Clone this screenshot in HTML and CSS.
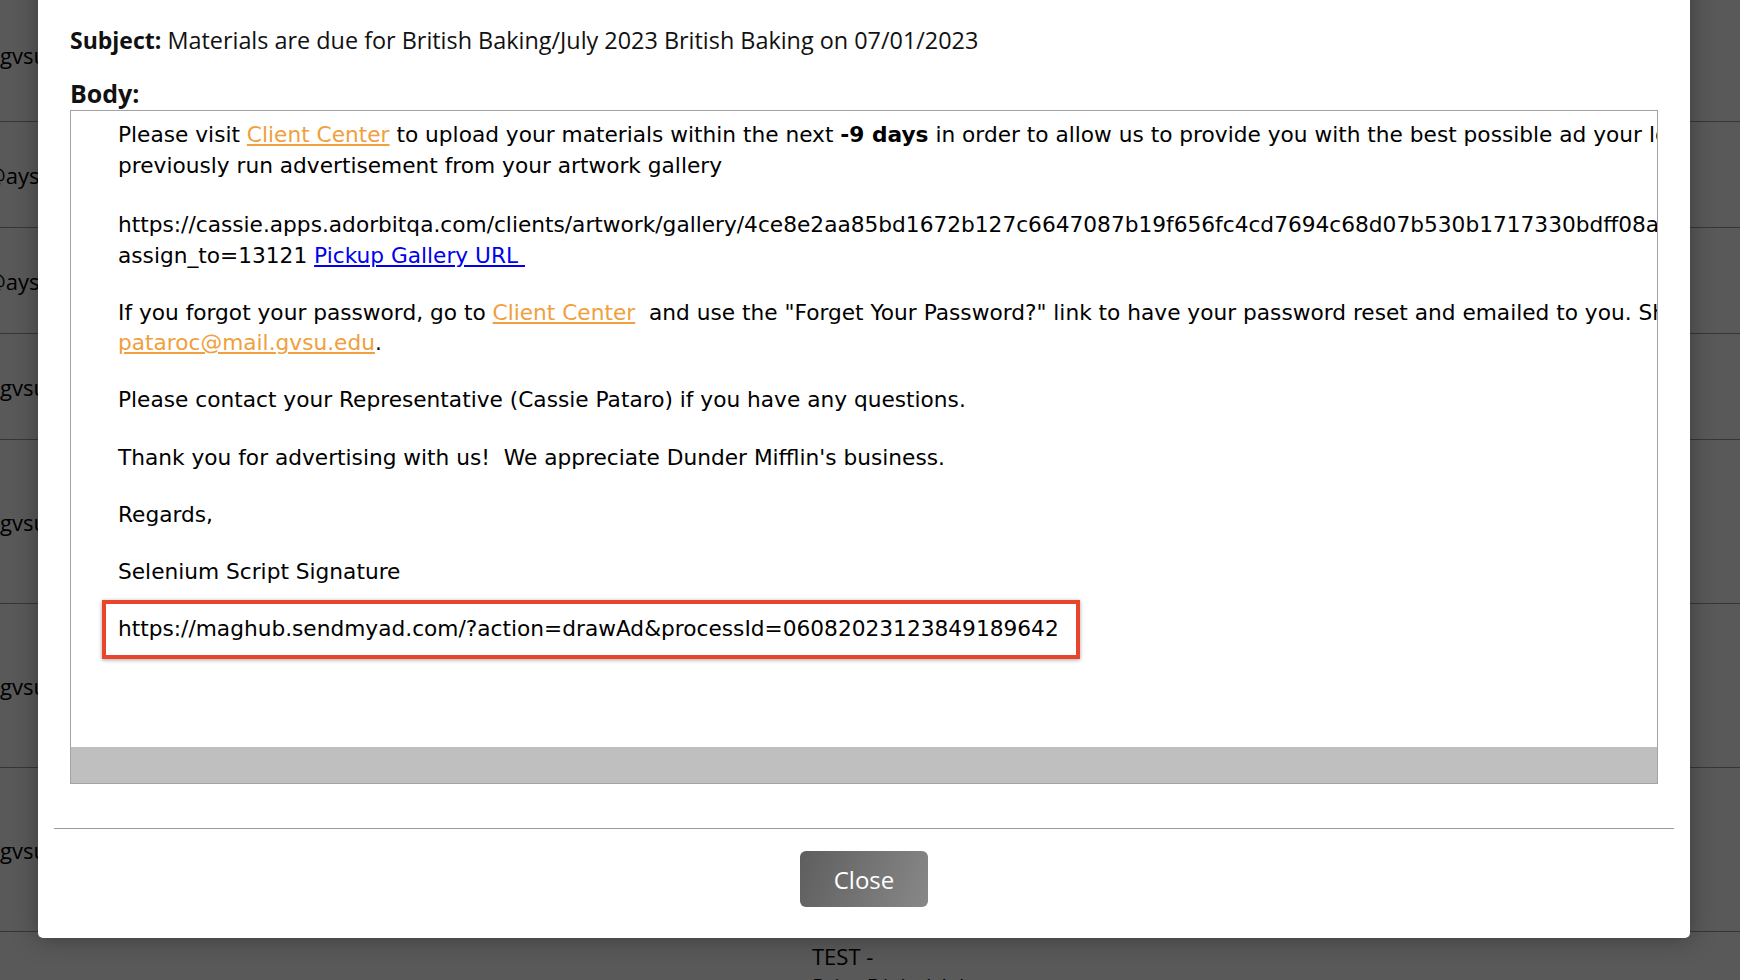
FILE: index.html
```html
<!DOCTYPE html>
<html>
<head>
<meta charset="utf-8">
<title>Email Preview</title>
<link rel="stylesheet" href="styles.css">
</head>
<body>
<table class="bgtable">
  <tr class="row-first"><td class="col-a">gvsu.edu</td><td class="col-b"></td></tr>
  <tr class="row-short"><td class="col-a shift">@ays.com</td><td class="col-b"></td></tr>
  <tr class="row-short"><td class="col-a shift">@ays.com</td><td class="col-b"></td></tr>
  <tr class="row-short"><td class="col-a">gvsu.edu</td><td class="col-b"></td></tr>
  <tr class="row-tall"><td class="col-a">gvsu.edu</td><td class="col-b"></td></tr>
  <tr class="row-tall"><td class="col-a">gvsu.edu</td><td class="col-b"></td></tr>
  <tr class="row-tall"><td class="col-a">gvsu.edu</td><td class="col-b"></td></tr>
  <tr class="row-last"><td class="col-a"></td><td class="col-b top">TEST -<br>Print Digital Ad</td></tr>
</table>

<div class="modal">
  <div class="modal-body">
    <div class="subject"><b>Subject:</b> Materials are due for British Baking/July 2023 British Baking on 07/01/2023</div>
    <div class="body-label">Body:</div>
    <div class="mailbox">
      <div class="mail">
        <p class="first">Please visit <a class="orange" href="#">Client Center</a> to upload your materials within the next <b>-9 days</b> in order to allow us to provide you with the best possible ad your logo, or choose a<br>previously run advertisement from your artwork gallery</p>
        <p>https://cassie.apps.adorbitqa.com/clients/artwork/gallery/4ce8e2aa85bd1672b127c6647087b19f656fc4cd7694c68d07b530b1717330bdff08a61c2e?pickup=1&amp;<br>assign_to=13121 <a class="blue" href="#">Pickup Gallery URL&nbsp;</a></p>
        <p>If you forgot your password, go to <a class="orange" href="#">Client Center</a>&nbsp; and use the "Forget Your Password?" link to have your password reset and emailed to you. Should you need help, contact<br><a class="orange" href="#">pataroc@mail.gvsu.edu</a>.</p>
        <p>Please contact your Representative (Cassie Pataro) if you have any questions.</p>
        <p>Thank you for advertising with us!&nbsp; We appreciate Dunder Mifflin's business.</p>
        <p>Regards,</p>
        <p>Selenium Script Signature</p>
        <p><span class="marked">https://maghub.sendmyad.com/?action=drawAd&amp;processId=06082023123849189642</span></p>
      </div>
      <div class="hscroll"></div>
    </div>
  </div>
  <div class="modal-footer">
    <button class="closebtn">Close</button>
  </div>
</div>
</body>
</html>
```

FILE: styles.css
```css
body {
  margin: 0;
  background: #595959;
  font-family: "Open Sans", "Liberation Sans", sans-serif;
  color: #000;
  overflow: hidden;
}

/* page behind the overlay */
.bgtable {
  width: 100%;
  border-collapse: collapse;
  margin-top: -12px;
  font-size: 22px;
}
.bgtable td {
  border-bottom: 1px solid #363636;
  padding: 0;
  vertical-align: middle;
  white-space: nowrap;
}
.row-first td { height: 133px; }
.row-short td { height: 105px; }
.row-tall td { height: 163px; }
.row-last td { height: 80px; }
.col-a { width: 812px; }
.shift { position: relative; left: -14px; }
.top {
  vertical-align: top !important;
  padding-top: 9px !important;
  line-height: 30px;
}

/* modal */
.modal {
  position: absolute;
  left: 38px;
  top: -20px;
  width: 1652px;
  box-sizing: border-box;
  background: #fff;
  border-radius: 5px;
  box-shadow: 0 0 24px rgba(0, 0, 0, 0.35);
}
.modal-body {
  padding: 44px 32px 44px;
}
.subject {
  font-size: 23.4px;
  line-height: 32px;
  color: #111;
}
.subject b {
  font-size: 23px;
}
.body-label {
  font-size: 25px;
  font-weight: bold;
  line-height: 32px;
  margin-top: 21px;
  margin-bottom: 1px;
  color: #111;
}
.mailbox {
  border: 1px solid #a3a3a3;
}
.mail {
  height: 636px;
  box-sizing: border-box;
  padding: 9px 0 0 47px;
  overflow: hidden;
  white-space: nowrap;
  font-family: "DejaVu Sans", Verdana, sans-serif;
  font-size: 21.7px;
  line-height: 30.5px;
  color: #000;
}
.mail p {
  margin: 0 0 26.6px;
}
.mail p.first {
  margin-bottom: 29.3px;
}
.orange { color: #f0a03c; }
.blue { color: #0000ee; }
.marked {
  display: inline-block;
  vertical-align: top;
  position: relative;
}
.marked::after {
  content: "";
  position: absolute;
  top: -14px;
  bottom: -15px;
  left: -16px;
  right: -21px;
  border: 4px solid #e8452c;
  box-shadow: 0 1px 4px rgba(0, 0, 0, 0.35);
}
.hscroll {
  height: 36px;
  background: #bfbfbf;
}
.modal-footer {
  margin: 0 16px;
  border-top: 1px solid #9a9a9a;
  padding: 22px 0 31px;
  text-align: center;
}
.closebtn {
  width: 128px;
  height: 56px;
  padding: 0;
  border: none;
  border-radius: 6px;
  background: linear-gradient(110deg, #5e5e5e, #888888);
  color: #fff;
  font-family: "Open Sans", "Liberation Sans", sans-serif;
  font-size: 24px;
  display: block;
  margin: 0 auto;
}
```
